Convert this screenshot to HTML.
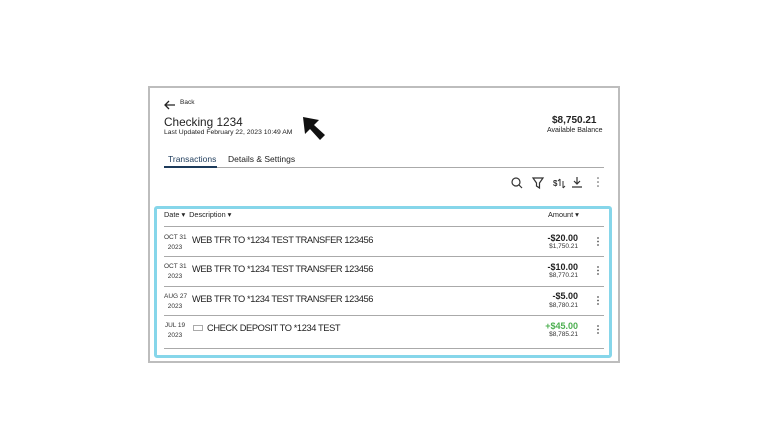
<!DOCTYPE html>
<html><head><meta charset="utf-8"><style>
*{margin:0;padding:0;box-sizing:border-box}
body{width:768px;height:432px;background:#fff;font-family:"Liberation Sans",sans-serif;color:#222;position:relative;overflow:hidden}
.a{position:absolute;white-space:nowrap}
.card{left:148px;top:86px;width:472px;height:277px;border:2px solid #bdbdbd}
.box{left:154px;top:206px;width:458px;height:152px;border:3px solid #86d6ea;border-radius:3px}
.line{position:absolute;height:1px;background:#aaa;left:164px;width:440px}
.d{font-size:6.5px;text-align:center;width:22px;line-height:10px;color:#333}
.desc{font-size:9.3px;letter-spacing:-0.4px;color:#222}
.amt{font-size:9px;font-weight:bold;text-align:right;width:60px}
.bal{font-size:6.5px;text-align:right;width:60px;color:#333}
</style></head><body>
<div class="a card"></div>
<div class="a" style="left:164px;top:97px"><svg width="12" height="10"><path d="M11 5H1M5 1L1 5L5 9" stroke="#222" stroke-width="1.3" fill="none"/></svg></div>
<div class="a" style="left:180px;top:99px;font-size:6.5px">Back</div>
<div class="a" style="left:164px;top:115px;font-size:11.8px;color:#222">Checking 1234</div>
<div class="a" style="left:164px;top:129px;font-size:6.8px">Last Updated February 22, 2023 10:49 AM</div>
<svg class="a" style="left:300px;top:114px" width="30" height="30"><path d="M3 3L5 20L10 15L20 26L25 21L14 11L19 6Z" fill="#111"/></svg>
<div class="a" style="left:552px;top:115px;font-size:10px;font-weight:bold">$8,750.21</div>
<div class="a" style="left:547px;top:127px;font-size:7px">Available Balance</div>
<div class="a" style="left:168px;top:154px;font-size:8.5px;color:#1c3a5a">Transactions</div>
<div class="a" style="left:228px;top:154px;font-size:8.5px">Details &amp; Settings</div>
<div class="a" style="left:164px;top:167px;width:440px;height:1px;background:#aaa"></div>
<div class="a" style="left:164px;top:166px;width:53px;height:2px;background:#1c3a5a"></div>
<svg class="a" style="left:510px;top:176px" width="100" height="14" fill="none" stroke="#333" stroke-width="1.2">
<circle cx="6" cy="6" r="4"/><path d="M9 9L12 12"/>
<path d="M23 2H33L29.5 7V12L26.5 10V7Z"/>
<text x="43" y="10" font-size="8" fill="#333" stroke="none" font-family="Liberation Sans" font-weight="bold">$</text><path d="M50 3V10M48 5L50 3M53 5V12M55 10L53 12" stroke-width="1"/>
<path d="M67 1V8M64 5L67 8L70 5M62 11H72" />
<circle cx="88" cy="2" r=".8" fill="#555" stroke="none"/><circle cx="88" cy="6" r=".8" fill="#555" stroke="none"/><circle cx="88" cy="10" r=".8" fill="#555" stroke="none"/>
</svg>
<div class="a box"></div>
<div class="a" style="left:164px;top:210px;font-size:7.3px">Date &#9662;&nbsp;&nbsp;Description &#9662;</div>
<div class="a" style="left:548px;top:210px;font-size:7.3px">Amount &#9662;</div>
<div class="line" style="top:226px"></div>
<div class="line" style="top:256px"></div>
<div class="line" style="top:286px"></div>
<div class="line" style="top:315px"></div>
<div class="line" style="top:348px"></div>

<div class="a d" style="left:164px;top:233px">OCT 31<br>2023</div>
<div class="a desc" style="left:192px;top:235px">WEB TFR TO *1234 TEST TRANSFER 123456</div>
<div class="a amt" style="left:518px;top:233px">-$20.00</div>
<div class="a bal" style="left:518px;top:243px">$1,750.21</div>

<div class="a d" style="left:164px;top:262px">OCT 31<br>2023</div>
<div class="a desc" style="left:192px;top:264px">WEB TFR TO *1234 TEST TRANSFER 123456</div>
<div class="a amt" style="left:518px;top:262px">-$10.00</div>
<div class="a bal" style="left:518px;top:272px">$8,770.21</div>

<div class="a d" style="left:164px;top:292px">AUG 27<br>2023</div>
<div class="a desc" style="left:192px;top:294px">WEB TFR TO *1234 TEST TRANSFER 123456</div>
<div class="a amt" style="left:518px;top:291px">-$5.00</div>
<div class="a bal" style="left:518px;top:302px">$8,780.21</div>

<div class="a d" style="left:164px;top:321px">JUL 19<br>2023</div>
<div class="a" style="left:193px;top:325px;width:10px;height:6px;border:1px solid #aaa"></div>
<div class="a desc" style="left:207px;top:323px">CHECK DEPOSIT TO *1234 TEST</div>
<div class="a amt" style="left:518px;top:321px;color:#4caf50">+$45.00</div>
<div class="a bal" style="left:518px;top:331px">$8,785.21</div>

<svg class="a" style="left:595px;top:236px" width="6" height="104" fill="#555">
<circle cx="3" cy="2" r=".9"/><circle cx="3" cy="5.5" r=".9"/><circle cx="3" cy="9" r=".9"/>
<circle cx="3" cy="31" r=".9"/><circle cx="3" cy="34.5" r=".9"/><circle cx="3" cy="38" r=".9"/>
<circle cx="3" cy="61" r=".9"/><circle cx="3" cy="64.5" r=".9"/><circle cx="3" cy="68" r=".9"/>
<circle cx="3" cy="90" r=".9"/><circle cx="3" cy="93.5" r=".9"/><circle cx="3" cy="97" r=".9"/>
</svg>
</body></html>
